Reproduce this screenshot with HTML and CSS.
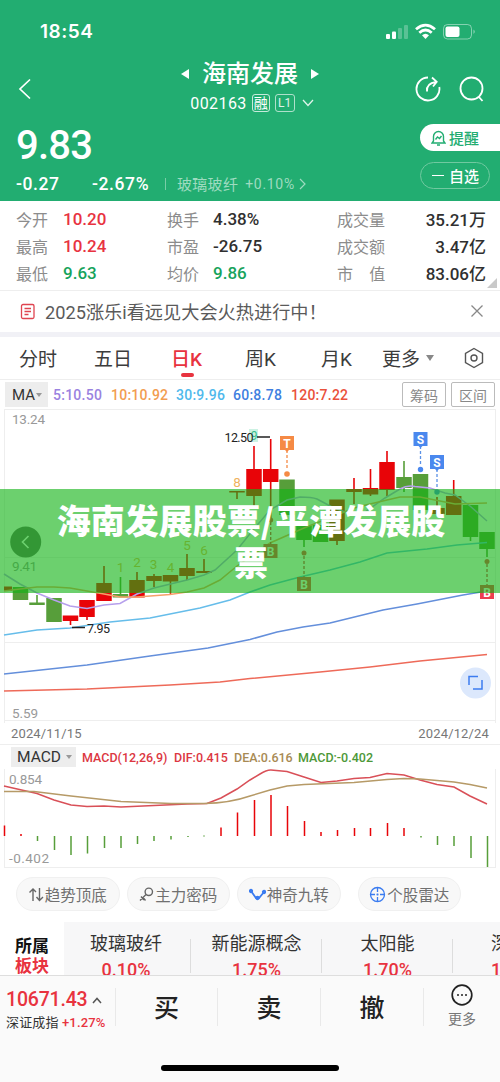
FILE: index.html
```html
<!DOCTYPE html>
<html lang="zh-CN">
<head>
<meta charset="utf-8">
<title>海南发展 002163</title>
<link rel="stylesheet" href="styles.css">
</head>
<body>
<main class="app">
  <header class="top">
    <div class="status">
      <span class="clock">18:54</span>
      <svg class="status-icons" width="92" height="18" viewBox="0 0 92 18" fill="#fff">
        <rect x="1" y="11" width="4" height="5" rx="1"/><rect x="7" y="8.500" width="4" height="7.500" rx="1"/>
        <g opacity=".25"><rect x="13" y="5" width="4" height="11" rx="1"/><rect x="19" y="2" width="4" height="14" rx="1"/></g>
        <g fill="none" stroke="#fff" stroke-width="2.800"><path d="M31 6.200Q40.500-2 50 6.200"/><path d="M34.300 9.700Q40.500 4.300 46.700 9.700"/></g>
        <path d="M37 12.300Q40.500 9.300 44 12.300L40.500 16Z"/>
        <rect x="58.500" y="1.500" width="28" height="14.500" rx="4" fill="none" stroke="#fff" stroke-opacity=".45"/>
        <rect x="60.500" y="3.500" width="14" height="10.500" rx="2"/><path d="M88.500 6.500Q91 8.700 88.500 11Z" opacity=".5"/>
      </svg>
    </div>
    <div class="nav">
      <svg class="back" width="14" height="22" viewBox="0 0 14 22"><path d="M12 1.500 2 11 12 20.500"/></svg>
      <div class="title-box">
        <div class="title"><svg width="8" height="12"><path d="M8 1V11L0 6Z"/></svg><h1>海南发展</h1><svg width="8" height="12"><path d="M0 1V11L8 6Z"/></svg></div>
        <div class="code"><span class="code-num">002163</span><span class="tag">融</span><span class="tag level">L1</span><svg width="12" height="8" viewBox="0 0 12 8"><path d="M1 1 6 6.500 11 1"/></svg></div>
      </div>
      <div class="tools">
        <svg width="26" height="26" viewBox="0 0 26 26"><path d="M13 1.500A11.500 11.500 0 1 0 24.300 11"/><path d="M12 15.500Q11 7.500 21 6M17 1.500 21.700 5.800 18 10.500"/></svg>
        <svg width="26" height="26" viewBox="0 0 26 26"><circle cx="12.500" cy="12.500" r="11"/><path d="M19.500 20.500 23.500 25"/></svg>
      </div>
    </div>
    <div class="quote">
      <div class="prices">
        <div class="price">9.83</div>
        <div class="change"><b class="chg">-0.27</b><b class="pct">-2.67%</b><i></i><span class="ind">玻璃玻纤</span><span class="ind-pct">+0.10%</span><svg width="7" height="12" viewBox="0 0 7 12"><path d="M1 1 6 6 1 11"/></svg></div>
      </div>
      <div class="actions">
        <div class="remind"><svg width="15" height="16" viewBox="0 0 15 16"><path d="M2.500 11V6.500a5 5 0 0 1 10 0V11l1.500 2H1ZM6 15h3M4.500 9.500 6.500 7 8.500 8.500 10.500 6"/></svg>提醒</div>
        <div class="self"><i></i>自选</div>
      </div>
    </div>
  </header>

  <section class="stats">
    <span>今开</span><b class="up">10.20</b><span>换手</span><b>4.38%</b><span class="wide">成交量</span><b class="end">35.21万</b>
    <span>最高</span><b class="up">10.24</b><span>市盈</span><b>-26.75</b><span class="wide">成交额</span><b class="end">3.47亿</b>
    <span>最低</span><b class="down">9.63</b><span>均价</span><b class="down">9.86</b><span class="wide">市&emsp;值</span><b class="end">83.06亿</b>
    <i class="corner"></i>
  </section>

  <section class="notice">
    <svg width="16" height="17" viewBox="0 0 16 17"><rect x="1.500" y="1.500" width="12.500" height="14" rx="1.500"/><path d="M4.500 5.500h6.500M4.500 8.500h6.500M4.500 11.500h4"/></svg>
    <span>2025涨乐i看远见大会火热进行中！</span>
    <svg class="close" width="12" height="12" viewBox="0 0 12 12"><path d="M.5.500 11.500 11.500M11.500.5.500 11.500"/></svg>
  </section>

  <nav class="tabs">
    <span>分时</span><span>五日</span><span class="active">日K</span><span>周K</span><span>月K</span><span class="more">更多<i></i></span>
    <svg width="20" height="22" viewBox="0 0 20 22"><path d="M10 1.500 18.500 6.300V15.700L10 20.500 1.500 15.700V6.300Z"/><circle cx="10" cy="11" r="3"/></svg>
  </nav>

  <section class="ma-row">
    <span class="select">MA<i></i></span>
    <b class="m5">5:10.50</b><b class="m10">10:10.92</b><b class="m30">30:9.96</b><b class="m60">60:8.78</b><b class="m120">120:7.22</b>
    <span class="btn first">筹码</span><span class="btn">区间</span>
  </section>

  <svg class="kline" width="500" height="314" viewBox="0 409 500 314">
    <path class="grid" d="M4.500 409V723M495.500 409V723M4 409.500H495M4 557.500H495M4 642.500H495M4 720.500H495"/>
    <text class="axis" x="12" y="423.500" textLength="33">13.24</text>
    <text class="axis" x="12" y="570.500" textLength="25">9.41</text>
    <text class="axis" x="12" y="717.500" textLength="26">5.59</text>
    <g class="count"><text x="120.500" y="572">1</text><text x="137" y="567">2</text><text x="153.500" y="569">3</text><text x="170.500" y="572">4</text><text x="187" y="550">5</text><text x="204" y="555">6</text><text x="237" y="487">8</text></g>
    <rect x="249" y="429" width="9" height="13" fill="#ccf2e3"/><text x="254" y="440" class="nine">9</text>
    <g class="clip">
    <path class="wick red" d="M70.500 620V625M87 600V620M104 566V600M137 572V596M154 574V587M170.500 575V594M187 554V580M204 559V573M237 491V499M254 446V507M270.700 439V520M312 0M337 500V545M354 478V504M370.500 469V496M387 451V496M437 497V512M453.700 480V515"/>
    <path class="wick green" d="M37 595V604M120.500 577V597M287 480V515M304 530V547M404 461V492M470.500 505V541M487 532V557"/>
    <path class="body red" d="M70.500 615.500V621M87 600V617M104 583V601M137 580V597.500M154 576V581M170.500 575V581.500M187 568V576M204 571V573M237 491V492.600M254 469V496M270.700 469V482M337 499.500V541M354 489V492M370.500 488V494.500M387 462V490M437 508V514M453.700 496V515"/>
    <path d="M4 586.500H12V591H4Z" fill="#e80408"/>
    <path class="body green" d="M20.500 587V600M37 602.500V605M54 598V622M120.500 594V597.500M287 479.500V515M304 526V540M320.500 525V542M404 477V488M420.500 474V510M470.500 505V537M487 532V549"/>
    </g>
    <path class="line" stroke="#b6a0ec" d="M4 574 20 584 37 593 54 600 70 606 87 608.500 104 605 120 603.500 137 594 154 588 187 580 204 575 215 570 237 550 253 530 270 510 287 500 300 497Q312 497 317 499L332 507 345 512H365L385 498 400 489Q407 485 415 486.500L430 488 445 493 455 495 470 506 487 521"/>
    <path class="line" stroke="#f6a06a" d="M4 591 20 589 37 587H54L70 588 87 591 104 594 120 597H137L170 594.500 187 592 204 588 220 580 237 566 253 555 270 543 304 528 337 515 354 508 370 504 387 500 400 497H420L440 501 455 504 487 503"/>
    <path class="line" stroke="#66bdea" d="M4 635 37 630 70 628 110 622 150 618 200 608 230 600 250 592 270 585 300 577 330 570 360 562 387 553 427 549 457 545 487 542.500"/>
    <path class="line" stroke="#648fdb" d="M4 674 87 665 150 656 208 648 250 639.500 277 632 303 627 330 623 383 610 417 604 463 595 487 591"/>
    <path class="line" stroke="#ee6a59" d="M4 691 87 689 170 685 220 682 250 678.500 320 672 370 667 420 661 487 654.500"/>
    <path d="M257 437H270M72 627.500H85" stroke="#222" stroke-width="1.500"/>
    <text class="mark" x="224.500" y="442" textLength="29">12.50</text><text class="mark" x="87" y="633" textLength="23">7.95</text>
    <g fill="none" stroke-width="1.300" stroke-dasharray="3 2">
      <path stroke="#f58a45" d="M287 450V470"/><path stroke="#5b91e6" d="M420.500 446V466M437 469V489"/><path stroke="#d8344a" d="M270.700 522V545M304 556V577M487 564V585"/>
    </g>
    <g fill="#f58a45"><path d="M280 436h14v14h-5l-2 2-2-2h-5Z"/><circle cx="287" cy="474" r="2.800"/></g>
    <g fill="#4a88ee"><path d="M413.500 432h14v14h-5l-2 2-2-2h-5ZM430 455h14v14h-5l-2 2-2-2h-5Z"/><circle cx="420.500" cy="469.500" r="2.700"/><circle cx="437" cy="492" r="2.700"/></g>
    <g fill="#ee3e50"><path d="M263.500 544h14v14h-14ZM297 577h14v14h-14ZM480 585h14v14h-14Z"/><circle cx="270.700" cy="520" r="2.500"/><circle cx="304" cy="553" r="2.500"/><circle cx="487" cy="561.500" r="2.500"/></g>
    <g class="badge"><text x="287" y="447.500">T</text><text x="420.500" y="443.500">S</text><text x="437" y="466.500">S</text><text x="270.500" y="555.500">B</text><text x="304" y="588.500">B</text><text x="487" y="596.500">B</text></g>
    <circle cx="25.700" cy="542" r="15.500" fill="#6b6b6b"/><path d="M28.500 536 22.500 542 28.500 548" fill="none" stroke="#fff" stroke-width="1.600"/>
    <circle cx="475.500" cy="683" r="15.500" fill="#dce8fc"/><path d="M469 685V676.500H478M473 689H482V680" fill="none" stroke="#3c7cf0" stroke-width="1.500"/>
  </svg>

  <div class="dates"><span>2024/11/15</span><span>2024/12/24</span></div>
  <section class="macd-row">
    <span class="select">MACD<i></i></span><b class="c-red macd-name">MACD(12,26,9)</b><b class="c-red dif">DIF:0.415</b><b class="c-dea dea">DEA:0.616</b><b class="c-green val">MACD:-0.402</b>
  </section>
  <svg class="macd" width="500" height="100" viewBox="0 769 500 100">
    <path class="grid" d="M4.500 769V868M495.500 769V868M4 867.500H495"/>
    <text class="axis" x="9" y="784" textLength="33">0.854</text><text class="axis" x="9" y="863" textLength="40">-0.402</text>
    <path class="bars red" d="M4.500 825.500V836M21 834V836M221 827.500V836M237.500 812.500V836M254.500 800V836M271 795V836M287.500 806V836M304.500 821V836M321 832V836M337.500 830V836M354.500 828V836M370.500 828V836M387.500 823V836M404 828V836"/>
    <path class="bars green" d="M37.500 836V841M54.500 836V850M71 836V855M87.500 836V853.500M104.500 836V848M121 836V848M137.500 836V844M154 836V841M171 836V839.500M188 836V837M204 835.500V836.500M421 836V837.500M437.500 836V845M454 836V846M471 836V858M487.500 836V867"/>
    <path class="line" stroke="#d95058" d="M4 786 37 793.500 54 800 71 805 87 806.500 104 806 121 807 154 805.500 187 804 207 803.500 221 798 237 789 250 780 260 774Q267 769.700 271 770L287 771.500 304 777 321 782.500 337 781 354 778.500 370 777.500 387 773.500 404 775 420 780 437 784.500 454 787 470 796 487 804"/>
    <path class="line" stroke="#b69a67" d="M4 791.500H34L71 796 121 801.500 171 803.500H204Q230 803 250 796L270 790 287 786 304 784.500 354 782.500 387 779.500 404 778.500 420 779 454 782 470 784.500 487 788"/>
  </svg>

  <section class="chips">
    <span><svg width="15" height="15" viewBox="0 0 15 15"><path d="M4 14V2M.5 5.500 4 2 7 5M10.500 1V13M7.500 10 10.500 13.500 14 10"/></svg>趋势顶底</span>
    <span><svg width="15" height="15" viewBox="0 0 15 15"><circle cx="9.800" cy="4.800" r="3.700"/><path d="M7 7.500 1 13.500M4 10.500 6.500 13.500M2 9.500 5 13"/></svg>主力密码</span>
    <span><svg class="blue" width="17" height="15" viewBox="0 0 17 15"><path d="M2 4 7 11 10 11 15 5" stroke-width="1.800"/><g fill="#3b7cf0"><circle cx="2" cy="4" r="1.500"/><circle cx="8.500" cy="11" r="1.500"/><circle cx="15" cy="5" r="1.500"/></g></svg>神奇九转</span>
    <span class="radar"><svg class="blue" width="17" height="17" viewBox="0 0 17 17"><circle cx="8.500" cy="8.500" r="7"/><path d="M8.500 1V6M8.500 11V16M1 8.500H6M11 8.500H16M8.500 7.500V9.500M7.500 8.500H9.500"/></svg>个股雷达</span>
  </section>

  <section class="sectors">
    <div class="own"><b>所属</b><b class="up">板块</b></div>
    <div class="sector s1"><span>玻璃玻纤</span><em>0.10%</em></div>
    <div class="sector s2"><span>新能源概念</span><em>1.75%</em></div>
    <div class="sector s3"><span>太阳能</span><em>1.70%</em></div>
    <div class="sector s4"><span>深圳</span><em>1.27%</em></div>
  </section>

  <footer class="bottom">
    <div class="index"><div class="index-value">10671.43<svg width="10" height="7" viewBox="0 0 10 7"><path d="M1 6 5 1.500 9 6"/></svg></div><div class="index-name">深证成指 <em>+1.27%</em></div></div>
    <div class="trade">买</div><div class="trade">卖</div><div class="trade">撤</div>
    <div class="more-btn"><svg width="22" height="22" viewBox="0 0 22 22"><circle cx="11" cy="11" r="9.800"/><path d="M6 11h2M10 11h2M14 11h2"/></svg>更多</div>
    <i class="home"></i>
  </footer>

  <div class="banner">海南发展股票<span class="slash">/</span>平潭发展股票</div>
</main>
</body>
</html>
```

FILE: styles.css
```css
* { box-sizing: border-box; }
body { margin: 0; background: #fff; }
.app { position: relative; width: 500px; height: 1082px; overflow: hidden; font-family: Roboto, "Noto Sans CJK SC", sans-serif; color: #333; }
svg { display: block; flex: none; }
h1, em, i { margin: 0; font-style: normal; font-weight: inherit; }
b { font-weight: 500; }
span, b, em { white-space: nowrap; }
.up { color: #e8333f; }
.down { color: #17a35c; }

.top { height: 201px; background: #22ad71; color: #fff; }
.status { height: 56px; padding: 19px 23px 0 40px; display: flex; justify-content: space-between; }
.clock { font: 600 19px/26px Inter, sans-serif; letter-spacing: .5px; }
.status-icons { margin: 4px 0 0; }
.nav { height: 65px; display: grid; grid-template-columns: 120px 1fr 90px; }
.back { margin: 22px 0 0 18px; fill: none; stroke: #fff; stroke-width: 1.700; }
.title-box { display: flex; flex-direction: column; align-items: center; margin-left: -30px; }
.title { height: 35px; padding-top: 1px; display: flex; align-items: center; gap: 13px; fill: #fff; }
h1 { font-size: 24px; line-height: 35px; font-weight: 500; }
.code { height: 24px; display: flex; align-items: center; gap: 5px; margin-left: 4px; }
.code-num { font-size: 16px; letter-spacing: .4px; }
.tag { width: 18px; height: 18px; border: 1px solid rgba(255,255,255,.75); border-radius: 3px; font-size: 14px; line-height: 16px; display: flex; align-items: center; justify-content: center; }
.level { font-size: 12px; width: 20px; opacity: .85; }
.code svg { fill: none; stroke: #dff4ea; stroke-width: 1.300; margin-left: 2px; }
.tools { display: flex; gap: 18px; padding: 20px 0 0 5px; fill: none; stroke: #fff; stroke-width: 1.800; }
.quote { height: 80px; display: flex; justify-content: space-between; }
.prices { padding-left: 16px; }
.price { padding-top: 1px; font-size: 40px; line-height: 48px; font-weight: 500; letter-spacing: -.8px; }
.change { height: 27px; display: flex; align-items: center; font-size: 17.500px; letter-spacing: .5px; }
.chg { width: 76px; }
.pct { width: 73px; }
.pct, .chg { letter-spacing: .6px; }
.change i { width: 1px; height: 12px; background: #79cda7; }
.ind { font-size: 15px; margin-left: 11px; letter-spacing: .3px; color: #9edbc0; }
.ind-pct { font-size: 14px; margin: 0 4px 0 7px; letter-spacing: .7px; color: #9edbc0; }
.change svg { fill: none; stroke: #9edbc0; stroke-width: 1.200; }
.actions { width: 80px; padding-top: 3px; display: flex; flex-direction: column; gap: 11px; font-size: 15px; font-weight: 500; }
.remind { height: 27px; border-radius: 14px 0 0 14px; background: #fff; color: #22ad71; display: flex; align-items: center; gap: 3px; padding-left: 11px; }
.remind svg { fill: none; stroke: #22ad71; stroke-width: 1.400; }
.self { width: 70px; height: 27px; border: 1px solid #70c9a0; border-radius: 14px; display: flex; align-items: center; gap: 5px; padding-left: 11px; }
.self i { width: 12px; height: 1.500px; background: #fff; }

.stats { position: relative; height: 90px; padding: 4px 14px 5px 16px; display: grid; grid-template-columns: 47px 104px 46px 124px 60px 1fr; grid-auto-rows: 27px; align-items: center; border-bottom: 1px solid #eee; font-size: 16px; color: #8c8c8c; }
.stats b { color: #303030; font-size: 17px; padding-top: 1px; }
.stats b.up { color: #e8333f; }
.stats b.down { color: #17a35c; }
.stats .end { text-align: right; padding: 0; }
.corner { position: absolute; right: 3px; bottom: 2px; border: 5px solid transparent; border-right-color: #c9c9c9; border-bottom-color: #c9c9c9; }
.notice { height: 46px; border-bottom: 5px solid #f1f1f6; display: flex; align-items: center; padding: 0 17px 1px 20px; font-size: 18.200px; color: #5a5a5a; }
.notice svg { fill: none; stroke: #df4450; stroke-width: 1.300; margin-right: 9px; }
.notice .close { stroke: #888; margin: 0 0 0 auto; }
.tabs { height: 43px; border-bottom: 1px solid #eee; display: grid; grid-template-columns: 75px 77px 74px 76px 61px 82px 20px; align-items: center; padding: 0 0 1px 19px; font-size: 19px; color: #3c3c3c; }
.active { position: relative; color: #e8333f; font-weight: 500; }
.active::after { content: ""; position: absolute; left: 10px; bottom: -6px; width: 13px; height: 4px; border-radius: 2px; background: #e8333f; }
.more { display: flex; align-items: center; gap: 6px; }
.more i, .select i { border: 4.500px solid transparent; border-top: 6px solid #888; border-bottom: 0; }
.tabs svg { fill: none; stroke: #555; stroke-width: 1.400; }

.ma-row { height: 29px; padding: 2px 5px; display: flex; align-items: center; font-size: 14px; }
.select { background: #ededed; display: flex; align-items: center; }
.select i { border-width: 4px 3px 0; border-top-color: #999; }
.ma-row .select { width: 43px; height: 25px; padding-left: 7px; font-size: 15px; gap: 1px; }
.ma-row b { letter-spacing: .25px; }
.m5 { width: 58px; margin-left: 5px; color: #9a82e0; }
.m10 { width: 65px; color: #f29d51; }
.m30 { width: 57px; color: #50b9ec; }
.m60 { width: 58px; color: #3f7fe0; }
.m120 { color: #ea513b; }
.btn { width: 44px; height: 25px; border: 1px solid #bbb; border-radius: 2px; display: grid; place-items: center; color: #888; font-size: 14px; }
.first { margin: 0 5px 0 auto; }
.grid { fill: none; stroke: #eee; }
.axis { font-size: 13.500px; fill: #999; }
.line { fill: none; stroke-width: 1.500; }
.red { stroke: #e80408; }
.green { stroke: #579e3a; }
.wick { stroke-width: 1.600; }
.body { stroke-width: 15.500; }
.count { font-size: 13.500px; fill: #f0b25e; text-anchor: middle; }
.nine { font-size: 12px; fill: #36bd8c; text-anchor: middle; }
.mark { font-size: 12.500px; fill: #222; }
.badge { font-size: 12px; font-weight: 700; fill: #fff; text-anchor: middle; }
.dates { height: 21px; padding: 0 11px; display: flex; justify-content: space-between; align-items: center; color: #777; font-size: 13px; letter-spacing: .15px; }
.macd-row { height: 25px; border-top: 1px solid #eee; padding: 1px 11px; display: flex; align-items: center; font-size: 12.500px; }
.macd-row .select { width: 65px; height: 20px; padding-left: 6px; font-size: 15.500px; gap: 5px; }
.macd-name { width: 92px; margin-left: 6px; }
.dif { width: 60px; }
.dea { width: 64px; }
.c-red { color: #dc3742; }
.c-dea { color: #a88a54; }
.c-green { color: #4d9838; }
.bars { stroke-width: 1.500; }

.chips { height: 53px; padding: 8px 16px 11px; display: flex; gap: 7px; font-size: 15.500px; color: #707070; }
.chips span { width: 103.500px; height: 34px; border: 1px solid #f0f0f0; border-radius: 17px; background: #f8f8f8; display: flex; align-items: center; justify-content: center; gap: 1px; }
.chips .radar { margin-left: 10px; }
.chips svg { fill: none; stroke: #666; stroke-width: 1.400; }
.chips .blue { stroke: #3b7cf0; stroke-width: 1.300; }
.sectors { height: 53px; display: grid; grid-template-columns: 64px 127px 131px 131px 60px; overflow: hidden; background: #f7f7f8; }
.own { background: #fff; padding: 14px 0 0 15px; font-size: 17px; line-height: 20px; display: flex; flex-direction: column; }
.own b { font-weight: 700; color: #111; }
.own .up { color: #e8333f; }
.sector { position: relative; height: 60px; display: flex; flex-direction: column; align-items: center; padding: 9px 3px 0 0; font-size: 18px; line-height: 26px; }
.sector:not(.s4)::after { content: ""; position: absolute; right: 0; top: 17px; width: 1px; height: 34px; background: #ddd; }
.sector em { color: #e8333f; font-size: 18px; line-height: 26px; font-weight: 500; }
.s2, .s3 { padding-right: 0; }
.s4 { align-items: flex-start; padding-left: 38px; }
.bottom { position: relative; height: 107px; border-top: 1px solid #dedede; background: #fafafa; display: grid; grid-template-columns: 115px 102px 103px 103px 77px; }
.index { padding: 12px 0 0 6px; }
.index-value { display: flex; align-items: center; gap: 5px; font-size: 19.500px; line-height: 24px; font-weight: 500; letter-spacing: -.2px; color: #e8333f; }
.index-value svg { fill: none; stroke: #555; stroke-width: 1.500; }
.index-name { font-size: 13px; line-height: 22px; letter-spacing: .15px; }
.index-name em { color: #e8333f; font-weight: 500; font-size: 13px; }
.trade { height: 38px; margin-top: 12px; padding-bottom: 2px; border-left: 1px solid #e9e9e9; display: grid; place-items: center; font-size: 25px; font-weight: 500; color: #222; }
.more-btn { height: 38px; margin-top: 12px; border-left: 1px solid #e9e9e9; display: flex; flex-direction: column; align-items: center; font-size: 14px; line-height: 20px; color: #777; }
.more-btn svg { margin-top: -4px; margin-bottom: 3px; fill: none; stroke: #222; stroke-width: 1.700; }
.home { position: absolute; left: 161px; top: 89px; width: 178px; height: 6px; border-radius: 3px; background: #000; }
.banner { position: absolute; left: 0; top: 489px; width: 500px; height: 104px; padding: 10px 49px 10px 51px; background: rgba(18,179,21,.62); color: #fff; text-align: center; font-family: "Noto Sans CJK SC", sans-serif; font-size: 34px; line-height: 42px; font-weight: 900; word-break: break-all; }
.slash { letter-spacing: 1.500px; }
```
